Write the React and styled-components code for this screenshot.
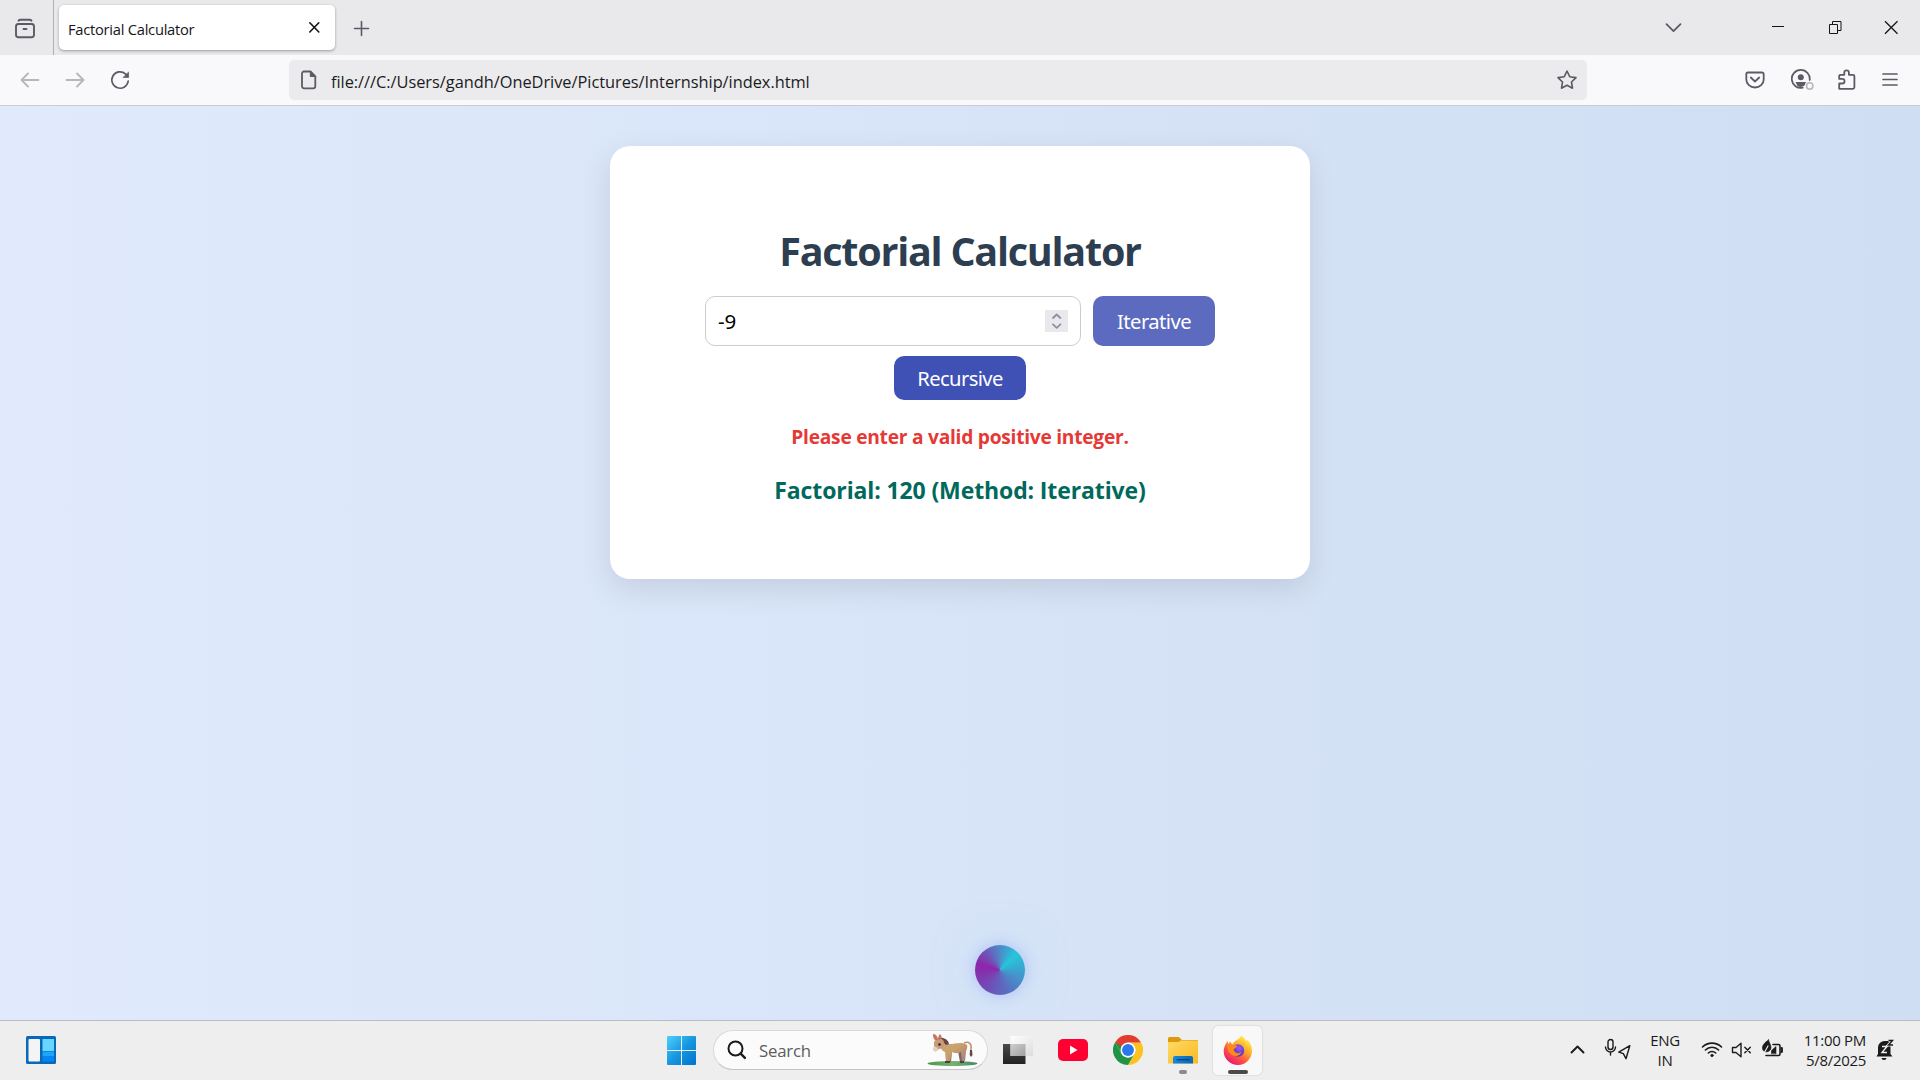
import React from 'react';
import styled, { createGlobalStyle, css } from 'styled-components';

const ui = "'Open Sans', 'Noto Sans', sans-serif";

const GlobalStyle = createGlobalStyle`
  *, *::before, *::after { box-sizing: border-box; }
  body { margin: 0; font-family: ${ui}; overflow: hidden; }
  svg { display: block; flex: none; }
`;

const Desktop = styled.div`
  width: 1920px;
  height: 1080px;
  display: flex;
  flex-direction: column;
  overflow: hidden;
`;

/* ---------- browser chrome ---------- */

const TabBar = styled.header`
  height: 55px;
  flex: none;
  display: flex;
  align-items: stretch;
  background: #e9e9eb;
  color: #5b5b66;
`;

const LibraryButton = styled.div`
  width: 54px;
  padding: 18px 0 0 14px;
  border-right: 1px solid #b0b0b5;
`;

const Tab = styled.div`
  width: 276px;
  height: 45px;
  margin: 5px 0 0 5px;
  padding: 0 14px 0 9px;
  display: flex;
  align-items: center;
  justify-content: space-between;
  border-radius: 5px;
  background: #fff;
  color: #15141a;
  box-shadow: 0 1px 3px rgba(0, 0, 0, 0.34);
`;

const TabTitle = styled.span`
  font-size: 14.7px;
  letter-spacing: -0.25px;
  line-height: 20px;
  padding-top: 3px;
  white-space: nowrap;
`;

const NewTab = styled.div`
  padding: 20px 0 0 18px;
`;

const WindowControls = styled.div`
  margin-left: auto;
  display: flex;
  padding: 18px 22px 0 0;
  color: #15141a;
`;

const Control = styled.div`
  width: 20px;
  height: 20px;
  margin-left: ${(p) => p.$gap || 0}px;
`;

const Toolbar = styled.div`
  height: 51px;
  flex: none;
  display: flex;
  align-items: center;
  background: #f9f9fb;
  border-bottom: 1px solid #cccccf;
  color: #5b5b66;
`;

const NavButtons = styled.div`
  width: 289px;
  display: flex;
  gap: 25px;
  padding-left: 20px;
`;

const NavIcon = styled.div`
  width: 20px;
  opacity: ${(p) => (p.$disabled ? 0.42 : 1)};
`;

const UrlBar = styled.div`
  width: 1298px;
  height: 40px;
  padding: 0 9px 0 10px;
  display: flex;
  align-items: center;
  border-radius: 5px;
  background: #ebebed;
`;

const Url = styled.span`
  flex: 1;
  padding: 4px 0 0 12px;
  font-size: 16.4px;
  letter-spacing: -0.04px;
  line-height: 22px;
  color: #1c1b22;
  white-space: nowrap;
`;

const ToolbarActions = styled.div`
  margin-left: auto;
  padding-right: 18px;
  display: flex;
  gap: 20px;
`;

/* ---------- page ---------- */

const Page = styled.main`
  flex: 1;
  min-height: 0;
  padding-top: 40px;
  display: flex;
  flex-direction: column;
  align-items: center;
  background: linear-gradient(to right, #e0eafc, #cfdef3);
`;

const Card = styled.section`
  width: 700px;
  height: 433px;
  padding: 77px 94px 0;
  display: flex;
  flex-direction: column;
  align-items: center;
  border-radius: 20px;
  background: #fff;
  box-shadow: 0 10px 30px rgba(0, 0, 0, 0.1);
`;

const Title = styled.h1`
  margin: 0;
  height: 73px;
  font-size: 39.5px;
  font-weight: 700;
  line-height: 56px;
  letter-spacing: -1.24px;
  color: #2c3e50;
  white-space: nowrap;
`;

const Controls = styled.div`
  display: flex;
  flex-wrap: wrap;
  justify-content: center;
  gap: 10px 12px;
`;

const NumberField = styled.div`
  width: 376px;
  height: 50px;
  padding: 0 12px;
  display: flex;
  align-items: center;
  justify-content: space-between;
  border: 1px solid #ccc;
  border-radius: 10px;
  background: #fff;
  font: 20.5px 'Noto Sans', sans-serif;
  color: #000;
`;

const Spinner = styled.div`
  width: 23px;
  height: 22px;
  margin-top: -1px;
  background: #e9e9ed;
`;

const MethodButton = styled.button`
  width: ${(p) => p.$w}px;
  height: ${(p) => p.$h}px;
  padding: 0;
  border: 0;
  border-radius: 10px;
  background: ${(p) => (p.$hover ? '#5c6bc0' : '#3f51b5')};
  color: #fff;
  font: 20.2px 'Noto Sans', sans-serif;
  letter-spacing: ${(p) => p.$ls}px;
`;

const Message = styled.p`
  margin: ${(p) => p.$top}px 0 0;
  font-weight: 700;
  white-space: nowrap;
  line-height: 30px;
  ${(p) =>
    p.$error
      ? css`
          color: #e53935;
          font-size: 19.2px;
          letter-spacing: -0.26px;
        `
      : css`
          color: #00695c;
          font-size: 23px;
          letter-spacing: -0.12px;
        `}
`;

const Orb = styled.div`
  width: 50px;
  height: 50px;
  margin: auto 0 25px 80px;
  border-radius: 50%;
  background: conic-gradient(from 45deg, #26c6da, #5c6bc0, #8e24aa, #26c6da);
  box-shadow: 0 0 15px rgba(92, 107, 240, 0.3), 0 0 40px rgba(190, 230, 250, 0.5);
`;

/* ---------- taskbar ---------- */

const Taskbar = styled.footer`
  height: 60px;
  flex: none;
  display: flex;
  border-top: 1px solid #bcbdc2;
  background: #eeeeee;
  color: #1b1b1b;
`;

const Widgets = styled.div`
  width: 667px;
  padding: 15px 0 0 26px;
`;

const Apps = styled.div`
  display: flex;
  align-items: flex-start;
  padding-top: 5px;
`;

const StartButton = styled.div`
  width: 46px;
  padding-top: 10px;
`;

const SearchBox = styled.div`
  width: 275px;
  height: 40px;
  margin: 4px 5px 0 0;
  padding: 0 9px 0 13px;
  display: flex;
  align-items: center;
  border: 1px solid #d9d9d9;
  border-bottom-color: #c4c4c4;
  border-radius: 20px;
  background: #fbfbfb;
`;

const SearchText = styled.span`
  flex: 1;
  padding: 2px 0 0 12px;
  font-size: 16.8px;
  letter-spacing: -0.2px;
  line-height: 22px;
  color: #5d5d5d;
`;

const AppTile = styled.div`
  width: 49px;
  height: 49px;
  margin-right: 6px;
  padding-top: 9px;
  display: flex;
  flex-direction: column;
  align-items: center;
  border-radius: 5px;
  background: ${(p) => (p.$active ? '#f8f8f8' : 'transparent')};
  box-shadow: ${(p) => (p.$active ? '0 0 2px rgba(0,0,0,.18)' : 'none')};
`;

const Indicator = styled.i`
  width: ${(p) => (p.$active ? 20 : 8)}px;
  height: 4px;
  margin-top: 5px;
  border-radius: 2px;
  background: ${(p) => (p.$active ? '#4b4b4b' : '#8a8a8a')};
`;

const Tray = styled.div`
  margin-left: auto;
  padding-right: 25px;
  display: flex;
  align-items: flex-start;
  padding-top: 9px;
`;

const TrayIcon = styled.div`
  margin: 8px ${(p) => p.$mr}px 0 0;
`;

const TrayText = styled.div`
  width: ${(p) => p.$w}px;
  margin-right: ${(p) => p.$mr}px;
  text-align: ${(p) => p.$align};
  font-size: 15px;
  line-height: 20px;
  letter-spacing: -0.3px;
  white-space: nowrap;
`;

/* ---------- icons ---------- */

const Line = ({ w = 20, h = 20, sw = 1.6, children }) => (
  <svg
    width={w}
    height={h}
    viewBox={`0 0 ${w} ${h}`}
    fill="none"
    stroke="currentColor"
    strokeWidth={sw}
    strokeLinecap="round"
    strokeLinejoin="round"
  >
    {children}
  </svg>
);

const LibraryIcon = () => (
  <Line w={22} h={22} sw={1.9}>
    <rect x="2" y="6" width="18" height="13.3" rx="2.5" />
    <path d="M4.500 2.800C5 2 5.600 1.800 6.500 1.800h9c.9 0 1.500.2 2 1M9.500 11h3" />
  </Line>
);

const DonkeyIcon = () => (
  <svg width="51" height="34" viewBox="0 0 51 34">
    <defs>
      <linearGradient id="coat" x1="0" y1="0" x2="1" y2="1">
        <stop offset="0" stopColor="#d0a878" />
        <stop offset=".5" stopColor="#c7a06a" />
        <stop offset="1" stopColor="#9d7f86" />
      </linearGradient>
      <linearGradient id="grass">
        <stop offset="0" stopColor="#4b9550" />
        <stop offset=".5" stopColor="#77b36b" />
        <stop offset="1" stopColor="#3f8b69" />
      </linearGradient>
    </defs>
    <ellipse cx="25.500" cy="30.500" rx="25" ry="2.500" fill="url(#grass)" />
    <path d="M37 10c5-2 8 1 7 6v5" fill="none" stroke="#bb936c" strokeWidth="1.500" />
    <path d="M43 17l2 0 .5 5-1.500 2-1.300-2z" fill="#6b4340" />
    <path d="M20 17l5 1-1 11h-3zM31 18l6-2-1 13h-3z" fill="#82636b" />
    <path d="M13 7c4 2 5 4 9 4 6 0 13-3 18 1 1 3-1 5-1 7l-1 9h-3l-1-9c-4 2-7 1-9 0l-2 10h-4l-1-10c-3-1-5-4-5-7z" fill="url(#coat)" />
    <path d="M12 5c4-1 9 1 10 6l-3 1-5-5z" fill="#67463f" />
    <path d="M7 9c2-4 6-5 9-2 3 4 0 9-4 9l-3 2c-2 1-3-1-2-4z" fill="#c99b70" />
    <path d="M7 13l4 2-1 3c-2 1-4 0-4-2z" fill="#ddd0ca" />
    <path d="M6 1c3 0 5 3 5 6H8C6 5 6 3 6 1zM13 1c2 2 2 4 0 6l-2-1c0-2 1-4 2-5z" fill="#c5745f" />
    <circle cx="12.500" cy="11.500" r="1.300" fill="#281d61" />
    <path d="M18 28h5v2h-5zM33 28h4v2h-4z" fill="#553b48" />
  </svg>
);

const TaskViewIcon = () => (
  <svg width="30" height="30" viewBox="0 0 30 30">
    <defs>
      <linearGradient id="back" x2="0" y2="1">
        <stop stopColor="#4a4a4a" />
        <stop offset="1" stopColor="#222" />
      </linearGradient>
      <linearGradient id="front" x2="1" y2="1">
        <stop stopColor="#fff" />
        <stop offset="1" stopColor="#dcdcdc" />
      </linearGradient>
      <linearGradient id="overlap" x2="1" y2="1">
        <stop stopColor="#cfcfcf" />
        <stop offset="1" stopColor="#9f9f9f" />
      </linearGradient>
    </defs>
    <path d="M0 9h22.500v20H0z" fill="url(#back)" />
    <path d="M7.500 1H30v20H7.500z" fill="url(#front)" />
    <path d="M7.500 9h15v12h-15z" fill="url(#overlap)" />
  </svg>
);

const ChromeIcon = () => (
  <svg width="30" height="30" viewBox="0 0 48 48">
    <path d="M44.800 12A24 24 0 0 1 24 48L34.400 30A12 12 0 0 0 34.400 18L24 12z" fill="#fcc31e" />
    <path d="M24 48A24 24 0 0 1 3.200 12L13.600 30A12 12 0 0 0 34.400 30z" fill="#229342" />
    <path d="M3.200 12A24 24 0 0 1 44.800 12H24L10 20z" fill="#e33b2e" />
    <path d="M3.200 12L13.600 30 14 18z" fill="#229342" />
    <circle cx="24" cy="24" r="12" fill="#fff" />
    <circle cx="24" cy="24" r="9.500" fill="#2a78ee" />
  </svg>
);

const FolderIcon = () => (
  <svg width="30" height="30" viewBox="0 0 30 30">
    <defs>
      <linearGradient id="folder" x2="1" y2="1">
        <stop stopColor="#ffda66" />
        <stop offset="1" stopColor="#f8ba22" />
      </linearGradient>
      <linearGradient id="folderTag" x2="1" y2="0">
        <stop stopColor="#1689dc" />
        <stop offset="1" stopColor="#0b67b6" />
      </linearGradient>
    </defs>
    <path d="M0 3.500Q0 2 1.500 2H10q1 0 2 1l2 2h15q1 0 1 1v5H0z" fill="#dd9a0c" />
    <path d="M0 8q0-1 1-1h9.500l2.500-1.500h16q1 0 1 1V28.500H0z" fill="url(#folder)" />
    <path d="M5 28.500V23q0-2 2-2h16q2 0 2 2v5.500z" fill="url(#folderTag)" />
    <path d="M8.500 24.700h13" stroke="#07447e" strokeWidth="1.300" />
  </svg>
);

const FirefoxIcon = () => (
  <svg width="30" height="30" viewBox="0 0 30 30">
    <defs>
      <linearGradient id="fox" x1=".85" y1=".1" x2=".25" y2="1">
        <stop stopColor="#fff04a" />
        <stop offset=".35" stopColor="#ffae2a" />
        <stop offset=".65" stopColor="#ff543f" />
        <stop offset="1" stopColor="#e4137f" />
      </linearGradient>
      <radialGradient id="globe" cx=".6" cy=".3">
        <stop stopColor="#a556f4" />
        <stop offset="1" stopColor="#5a3bc4" />
      </radialGradient>
    </defs>
    <path d="M18.500.5c1.500 1.700 3.500 3 4.500 5.500l1.500-1c3 3 4.800 7 4.500 11.500C28.500 24 22.500 30 15 30S.7 24 .7 16.500c0-4 1.500-7.500 4-10.500l.5 3 2-2.500 2 3c2-3 4-4 5.500-5 2-1.500 3-2.500 3.800-4z" fill="url(#fox)" />
    <circle cx="15" cy="15.500" r="6.200" fill="url(#globe)" />
    <path d="M4.500 10c2-1 4-.5 5.500.7 1.500-.7 3-.5 4.300.2-.8 1.800-3 2.300-3.700 3.600 1 4 5.400 4.500 8 2.500-1 4-8 6-12 1-2-2.500-2-5-2.100-8z" fill="#ff8a1c" />
    <path d="M16 9c3-.5 5 1.500 5.500 3.500 1-2 0-4-1-5z" fill="#ffb52c" />
  </svg>
);

export default function App() {
  return (
    <Desktop>
      <GlobalStyle />
      <TabBar>
        <LibraryButton>
          <LibraryIcon />
        </LibraryButton>
        <Tab>
          <TabTitle>Factorial Calculator</TabTitle>
          <Line w={13} h={13} sw={1.6}>
            <path d="M1.800 1.800l9 9.200M10.800 1.800l-9 9.200" />
          </Line>
        </Tab>
        <NewTab>
          <Line w={18} h={18} sw={1.6}>
            <path d="M8.500 1.500v14M1.500 8.500h14" />
          </Line>
        </NewTab>
        <WindowControls>
          <Control>
            <Line sw={1.8}>
              <path d="M3.500 6.200l7 7 7-7" stroke="#5b5b66" />
            </Line>
          </Control>
          <Control $gap={85}>
            <svg width="20" height="20">
              <path d="M4 8.500h12" stroke="#15141a" />
            </svg>
          </Control>
          <Control $gap={37}>
            <svg width="20" height="20" fill="none" stroke="#15141a">
              <path d="M4.500 6.500h8v9h-8zM7.500 6.500v-3h8.500v9h-3.500" />
            </svg>
          </Control>
          <Control $gap={33}>
            <svg width="20" height="20" stroke="#15141a" strokeWidth="1.300">
              <path d="M7 3.200l12.500 12.500M19.500 3.200L7 15.700" />
            </svg>
          </Control>
        </WindowControls>
      </TabBar>

      <Toolbar>
        <NavButtons>
          <NavIcon $disabled>
            <Line sw={1.8}>
              <path d="M18.500 10h-17M8 3.500L1.500 10 8 16.500" />
            </Line>
          </NavIcon>
          <NavIcon $disabled>
            <Line sw={1.8}>
              <path d="M1.500 10h17M12 3.500l6.500 6.500-6.500 6.500" />
            </Line>
          </NavIcon>
          <NavIcon>
            <Line sw={1.700}>
              <path d="M18.200 11a8.200 8.200 0 1 1-2.800-7.200l2 2" />
              <path d="M18.600 2.200v5.300h-5.300z" fill="currentColor" strokeWidth=".6" />
            </Line>
          </NavIcon>
        </NavButtons>
        <UrlBar>
          <Line sw={1.800}>
            <path d="M5 1.500h6.500l4.800 4.800v10a2 2 0 0 1-2 2H5a2 2 0 0 1-2-2v-12.800a2 2 0 0 1 2-2z" />
            <path d="M11.300 1.500v5h5z" fill="currentColor" strokeWidth="1" />
          </Line>
          <Url>file:///C:/Users/gandh/OneDrive/Pictures/Internship/index.html</Url>
          <Line w={22} h={22} sw={1.6}>
            <path d="M11 2l2.700 5.700 6.300.9-4.500 4.400 1 6.200L11 16.200l-5.500 3 1-6.200L2 8.600l6.300-.9z" />
          </Line>
        </UrlBar>
        <ToolbarActions>
          <Line w={26} h={22} sw={1.800}>
            <path d="M3 3.500h14a1.700 1.700 0 0 1 1.700 1.700v5.300a8.700 8 0 0 1-17.400 0V5.200A1.700 1.700 0 0 1 3 3.500z" />
            <path d="M5.800 8.500l4.200 4 4.200-4" />
          </Line>
          <Line w={27} h={22} sw={1.800}>
            <path d="M18.700 11a9 9 0 1 0-7 7.700" />
            <circle cx="9.800" cy="8.300" r="3" fill="currentColor" stroke="none" />
            <path d="M4.500 13h10.500l-1.500 3.500c-3 2-5.500 1.500-7 .5z" fill="currentColor" stroke="none" />
            <circle cx="18.700" cy="17" r="3.200" stroke="#b5b5ba" strokeWidth="1.500" />
          </Line>
          <Line w={22} h={22} sw={1.800}>
            <path d="M1.200 19.800v-5.300h3a2.300 2.300 0 0 0 0-4.600h-3V7.300q0-1.500 1.500-1.500h3.600V3.600a2.300 2.300 0 0 1 4.600 0v2.200h4q1.500 0 1.500 1.500v11q0 1.500-1.500 1.500z" />
          </Line>
          <Line w={22} h={22} sw={1.700}>
            <path d="M3 5h14M3 10.500h14M3 16h14" />
          </Line>
        </ToolbarActions>
      </Toolbar>

      <Page>
        <Card>
          <Title>Factorial Calculator</Title>
          <Controls>
            <NumberField>
              <span>-9</span>
              <Spinner>
                <svg width="23" height="22" fill="none" stroke="#8f8f9d" strokeWidth="1.800" strokeLinecap="round" strokeLinejoin="round">
                  <path d="M8 8l3.700-3.500L15.400 8M8 14.300l3.700 3.500 3.700-3.500" />
                </svg>
              </Spinner>
            </NumberField>
            <MethodButton $w={122} $h={50} $ls={-0.55} $hover>
              Iterative
            </MethodButton>
            <MethodButton $w={132} $h={44} $ls={-0.6}>
              Recursive
            </MethodButton>
          </Controls>
          <Message $error $top={22}>
            Please enter a valid positive integer.
          </Message>
          <Message $top={23}>Factorial: 120 (Method: Iterative)</Message>
        </Card>
        <Orb />
      </Page>

      <Taskbar>
        <Widgets>
          <svg width="30" height="28">
            <rect width="30" height="28" rx="1.500" fill="#0868bb" />
            <rect x="2.500" y="3" width="11.500" height="22.500" rx="1" fill="#f4f4f5" />
            <rect x="16.500" y="3" width="11.500" height="12" fill="#66d7ff" />
            <rect x="16.500" y="15.500" width="11.500" height="5" fill="#20a4fa" />
            <rect x="16.500" y="20.500" width="11.500" height="5" fill="#0586f2" />
          </svg>
        </Widgets>
        <Apps>
          <StartButton>
            <svg width="29" height="29">
              <defs>
                <linearGradient id="win" gradientUnits="userSpaceOnUse" x1="0" y1="0" x2="29" y2="29">
                  <stop stopColor="#4dd0fc" />
                  <stop offset=".5" stopColor="#1797df" />
                  <stop offset="1" stopColor="#0072cf" />
                </linearGradient>
              </defs>
              <path d="M0 1q0-1 1-1h13v14H0zM15 0h13q1 0 1 1v13H15zM0 15h14v14H1q-1 0-1-1zM15 15h14v13q0 1-1 1H15z" fill="url(#win)" />
            </svg>
          </StartButton>
          <SearchBox>
            <Line sw={2}>
              <circle cx="8.500" cy="8.500" r="7" />
              <path d="M13.700 13.700l4.200 4.200" strokeWidth="2.400" />
            </Line>
            <SearchText>Search</SearchText>
            <DonkeyIcon />
          </SearchBox>
          <AppTile>
            <TaskViewIcon />
          </AppTile>
          <AppTile>
            <svg width="30" height="30" viewBox="0 0 30 30">
              <rect y="4" width="30" height="22" rx="5" fill="#ff0033" />
              <path d="M12 10.500v9l7.500-4.500z" fill="#fff" />
            </svg>
          </AppTile>
          <AppTile>
            <ChromeIcon />
          </AppTile>
          <AppTile>
            <FolderIcon />
            <Indicator />
          </AppTile>
          <AppTile $active>
            <FirefoxIcon />
            <Indicator $active />
          </AppTile>
        </Apps>
        <Tray>
          <TrayIcon $mr={17}>
            <Line w={20} h={20} sw={1.900}>
              <path d="M4.500 14.500l6-6 6 6" />
            </Line>
          </TrayIcon>
          <TrayIcon $mr={19}>
            <Line w={27} h={24} sw={1.400}>
              <rect x="4" y="1.500" width="5" height="10" rx="2.500" />
              <path d="M1.500 9a5 5 0 0 0 10 0M6.500 14v3M25.800 7.700l-11 6.500 4.500 1.500 2.700 5z" />
            </Line>
          </TrayIcon>
          <TrayText $w={30} $mr={21} $align="center">
            ENG
            <br />
            IN
          </TrayText>
          <TrayIcon $mr={8}>
            <Line w={22} h={22} sw={1.600}>
              <path d="M1.500 9a13.500 13.500 0 0 1 19 0M4.400 12a9.300 9.300 0 0 1 13.200 0M7.300 15a5.200 5.200 0 0 1 7.400 0" />
              <circle cx="11" cy="17.500" r="1.300" fill="currentColor" strokeWidth=".6" />
            </Line>
          </TrayIcon>
          <TrayIcon $mr={8}>
            <Line w={22} h={22} sw={1.400}>
              <path d="M1.500 9.500v5H5l5 4.300V5.200l-5 4.300zM13.800 9.300l5.500 5.500M19.300 9.300l-5.500 5.500" />
            </Line>
          </TrayIcon>
          <TrayIcon $mr={15}>
            <Line w={24} h={22} sw={1.600}>
              <path d="M12 6.500h5.500a1.500 1.500 0 0 1 1.500 1.500v8a1.500 1.500 0 0 1-1.500 1.500H5" />
              <path d="M20.800 10v4" strokeWidth="2.200" />
              <path d="M7.500 2c-4.500 3-7 6-5.500 10 1.500 2.500 5.500 2.500 7.500-.5C11 8 8 5 7.500 2z" fill="currentColor" strokeWidth=".8" />
              <path d="M7 8L2 17" strokeWidth="1.200" stroke="#eee" />
              <path d="M10.500 15.500v-3l4.500-4v7z" fill="currentColor" strokeWidth=".6" />
            </Line>
          </TrayIcon>
          <TrayText $w={66} $mr={9} $align="right">
            11:00 PM
            <br />
            5/8/2025
          </TrayText>
          <TrayIcon $mr={0}>
            <svg width="20" height="24" viewBox="0 0 20 24">
              <path d="M3 16V9.500a6.500 6.500 0 0 1 7-6.500h5.500v13l2 2.500h-16z" fill="#1b1b1b" />
              <path d="M6.500 20h5a2.500 2 0 0 1-5 0z" fill="#1b1b1b" />
              <path d="M7 8.500h5l-5 6h5" fill="none" stroke="#eee" strokeWidth="1.400" />
              <path d="M13.500 2.500h4l-4 4.500h4.500" fill="none" stroke="#eee" strokeWidth="3" />
              <path d="M13.500 2.500h4l-4 4.500h4.500" fill="none" stroke="#1b1b1b" strokeWidth="1.400" />
            </svg>
          </TrayIcon>
        </Tray>
      </Taskbar>
    </Desktop>
  );
}
